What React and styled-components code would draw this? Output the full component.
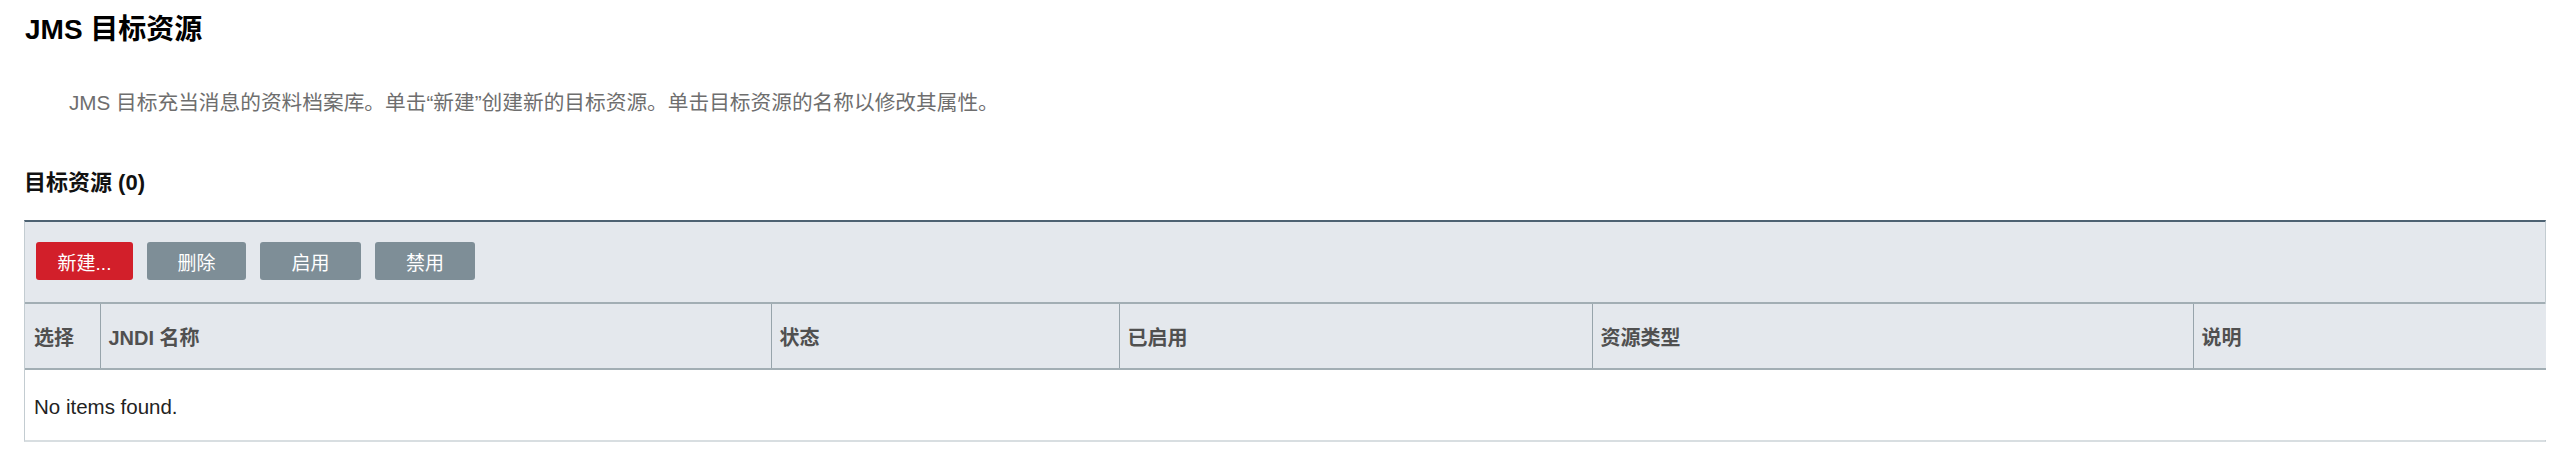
import React from "react";
import styled, { createGlobalStyle } from "styled-components";

const GlobalStyle = createGlobalStyle`
  html, body { margin: 0; padding: 0; background: #ffffff; }
  body { font-family: "Liberation Sans", Arial, "Noto Sans CJK SC", sans-serif; }
`;

const Page = styled.div`
  padding: 13px 14px 0 24px;
  display: flex;
  flex-direction: column;
`;

const Title = styled.h1`
  margin: 0;
  font-size: 28px;
  line-height: 34px;
  font-weight: bold;
  color: #000;
  padding-left: 1px;
`;

const Description = styled.p`
  margin: 41px 0 0;
  padding-left: 45px;
  font-size: 20.7px;
  line-height: 30px;
  color: #6e6e6e;
`;

const SectionHeading = styled.h2`
  margin: 50px 0 0;
  padding-left: 0;
  font-size: 22px;
  line-height: 29px;
  font-weight: bold;
  color: #111;
`;

const TableBox = styled.div`
  margin-top: 23px;
  border-top: 2px solid #4d6272;
  border-left: 1px solid #c3ccd1;
  border-right: 1px solid #c3ccd1;
  border-bottom: 2px solid #d8dee1;
`;

const Toolbar = styled.div`
  display: flex;
  gap: 14px;
  padding: 20px 11px 22px;
  background: #e4e8ed;
  border-bottom: 2px solid #a2aeb4;
`;

const Button = styled.button`
  height: 38px;
  width: ${(p) => p.$w}px;
  border: none;
  border-radius: 3px;
  background: ${(p) => (p.$primary ? "#d21f2a" : "#7e8e97")};
  color: #ffffff;
  font-family: "Liberation Sans", Arial, "Noto Sans CJK SC", sans-serif;
  font-size: 19px;
  padding: 0;
  cursor: pointer;
`;

const Table = styled.table`
  width: 100%;
  border-collapse: collapse;
  table-layout: fixed;
`;

const HeadCell = styled.th`
  height: 64px;
  padding: 0 0 0 8px;
  text-align: left;
  background: #e4e8ed;
  color: #505050;
  font-size: 20px;
  font-weight: bold;
  border-left: 1px solid #97a4ab;
  border-bottom: 2px solid #a2aeb4;
  white-space: nowrap;
  &:first-child { border-left: none; padding-left: 9px; }
`;

const EmptyCell = styled.td`
  height: 66px;
  padding: 4px 0 0 9px;
  font-size: 20.5px;
  color: #222;
  background: #ffffff;
`;

const columns = [
  { label: "选择", w: 75 },
  { label: "JNDI 名称", w: 671 },
  { label: "状态", w: 348 },
  { label: "已启用", w: 473 },
  { label: "资源类型", w: 601 },
  { label: "说明", w: 353 },
];

export default function App() {
  return (
    <>
      <GlobalStyle />
      <Page>
        <Title>JMS 目标资源</Title>
        <Description>
          JMS 目标充当消息的资料档案库。单击“新建”创建新的目标资源。单击目标资源的名称以修改其属性。
        </Description>
        <SectionHeading>目标资源 (0)</SectionHeading>
        <TableBox>
          <Toolbar>
            <Button $primary $w={97}>新建...</Button>
            <Button $w={99}>删除</Button>
            <Button $w={101}>启用</Button>
            <Button $w={100}>禁用</Button>
          </Toolbar>
          <Table>
            <colgroup>
              {columns.map((c) => (
                <col key={c.label} style={{ width: c.w }} />
              ))}
            </colgroup>
            <thead>
              <tr>
                {columns.map((c) => (
                  <HeadCell key={c.label}>{c.label}</HeadCell>
                ))}
              </tr>
            </thead>
            <tbody>
              <tr>
                <EmptyCell colSpan={6}>No items found.</EmptyCell>
              </tr>
            </tbody>
          </Table>
        </TableBox>
      </Page>
    </>
  );
}
